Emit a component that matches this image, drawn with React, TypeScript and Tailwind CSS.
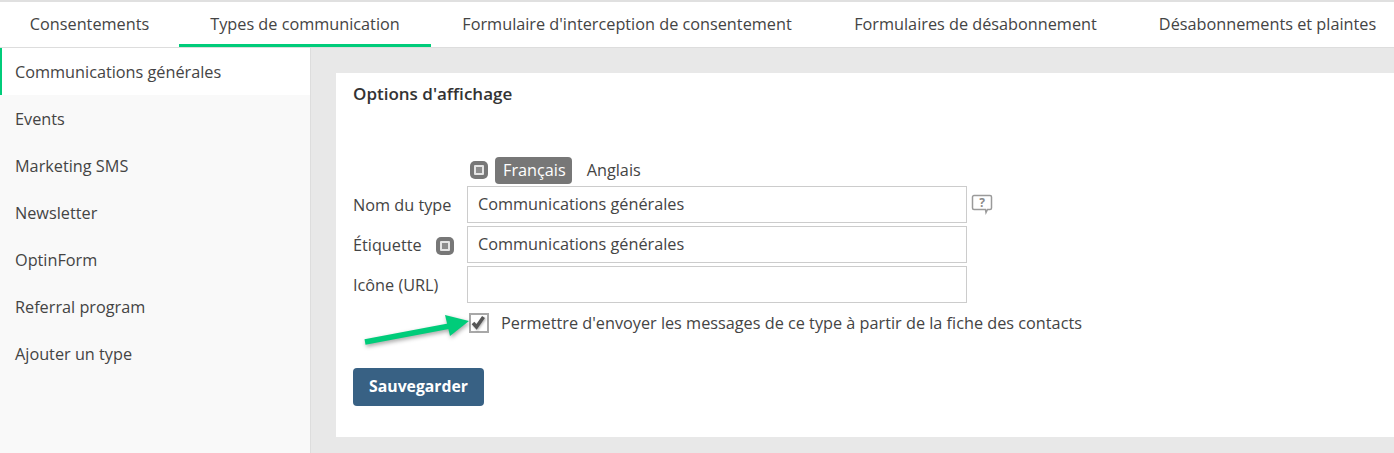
import React from 'react';

const tabs = [
  { label: 'Consentements', width: 'w-[179px]', active: false },
  { label: 'Types de communication', width: 'w-[252px]', active: true },
  { label: "Formulaire d'interception de consentement", width: 'w-[392px]', active: false },
  { label: 'Formulaires de désabonnement', width: 'w-[305px]', active: false },
  { label: 'Désabonnements et plaintes', width: 'w-[279px]', active: false },
];

const types = ['Communications générales', 'Events', 'Marketing SMS', 'Newsletter', 'OptinForm', 'Referral program', 'Ajouter un type'];

const LangIcon: React.FC = () => (
  <span className="w-[18px] h-[18px] rounded-[5px] bg-[#777777] flex items-center justify-center flex-shrink-0">
    <span className="w-[10px] h-[10px] border-2 border-[#e4e4e4] bg-[#8c8c8c] rounded-[1px]" />
  </span>
);

const HelpIcon: React.FC = () => (
  <svg width="22" height="22" viewBox="0 0 22 22" className="ml-[4px] mt-[7px] flex-shrink-0">
    <path d="M3 2.500h16a1.500 1.500 0 0 1 1.500 1.500v11a1.500 1.500 0 0 1-1.500 1.500h-2.500l-1.500 3-0.500-3H3a1.500 1.500 0 0 1-1.500-1.500V4A1.500 1.500 0 0 1 3 2.500z" fill="#ffffff" stroke="#9a9a9a" strokeWidth="1.500" />
    <text x="11" y="14" textAnchor="middle" fontSize="12" fontWeight="700" fill="#8a8a8a" fontFamily="Open Sans, sans-serif">?</text>
  </svg>
);

const Field: React.FC<{ value?: string; children: React.ReactNode; help?: boolean }> = ({ value, children, help }) => (
  <div className="flex items-start">
    <div className="w-[114px] h-[37px] pt-[2px] flex items-center gap-[14px] text-[#444444]">{children}</div>
    <div className="w-[500px] h-[37px] border border-[#cccccc] bg-white px-[10px] flex items-center text-[#444444]">{value}</div>
    {help && <HelpIcon />}
  </div>
);

export default function App() {
  return (
    <div className="w-[1394px] h-[453px] overflow-hidden bg-white text-[16.25px] text-[#444444] flex flex-col font-['Open_Sans',sans-serif]">
      <div className="h-[48px] border-t-2 border-b border-t-[#e0e0e0] border-b-[#dddddd] flex flex-shrink-0 bg-white">
        {tabs.map(tab => (
          <div
            key={tab.label}
            className={`${tab.width} h-[45px] flex-shrink-0 flex items-center justify-center whitespace-nowrap border-b-[3px] pt-[2px] ${tab.active ? 'border-[#00cc7a]' : 'border-transparent'}`}
          >
            {tab.label}
          </div>
        ))}
      </div>

      <div className="flex flex-1 min-h-0">
        <div className="w-[311px] flex-shrink-0 bg-[#f9f9f9] border-r border-[#dddddd]">
          {types.map((type, index) => (
            <div
              key={type}
              className={`h-[47px] pt-[2px] flex items-center ${index === 0 ? 'bg-white border-l-2 border-[#00cc7a] pl-[13px]' : 'pl-[15px]'}`}
            >
              {type}
            </div>
          ))}
        </div>

        <div className="flex-1 bg-[#e8e8e8] pt-[25px] pl-[25px] pb-[16px]">
          <div className="bg-white h-full pl-[17px] pt-[7px]">
            <h2 className="font-semibold text-[17px] leading-[27px] text-[#333333]">Options d'affichage</h2>

            <div className="flex items-center mt-[49px] pl-[117px] h-[28px]">
              <LangIcon />
              <span className="ml-[7px] h-[27px] pl-[8px] pr-[6px] rounded-[4px] bg-[#777777] text-white flex items-center">Français</span>
              <span className="ml-[15px]">Anglais</span>
            </div>

            <div className="flex flex-col gap-[3px] mt-[2px]">
              <Field value="Communications générales" help>Nom du type</Field>
              <Field value="Communications générales">
                <span>Étiquette</span>
                <LangIcon />
              </Field>
              <Field>Icône (URL)</Field>
            </div>

            <div className="flex items-center mt-[9px] pl-[116px] h-[22px] relative">
              <span className="w-[20px] h-[20px] border-2 border-[#a8a8a8] bg-white flex items-center justify-center">
                <svg width="16" height="16" viewBox="0 0 16 16" className="drop-shadow-[1px_1px_1px_rgba(0,0,0,0.3)]">
                  <path d="M2 8 L5.500 12 L12.500 2" fill="none" stroke="#555555" strokeWidth="3.500" />
                </svg>
              </span>
              <span className="ml-[12px]">Permettre d'envoyer les messages de ce type à partir de la fiche des contacts</span>
              {/* green annotation arrow */}
              <svg width="124" height="44" viewBox="0 0 124 44" className="absolute left-0 top-[-8px] drop-shadow-[1px_2px_2px_rgba(0,0,0,0.35)]">
                <path d="M12 38 L102 21" stroke="#00cc7a" strokeWidth="5.500" fill="none" />
                <path d="M92 11 L116 17 L97 32 Z" fill="#00cc7a" />
              </svg>
            </div>

            <button className="mt-[34px] w-[131px] h-[38px] rounded-[4px] bg-[#386184] text-white text-[15.75px] font-bold flex items-center justify-center">
              Sauvegarder
            </button>
          </div>
        </div>
      </div>
    </div>
  );
}
